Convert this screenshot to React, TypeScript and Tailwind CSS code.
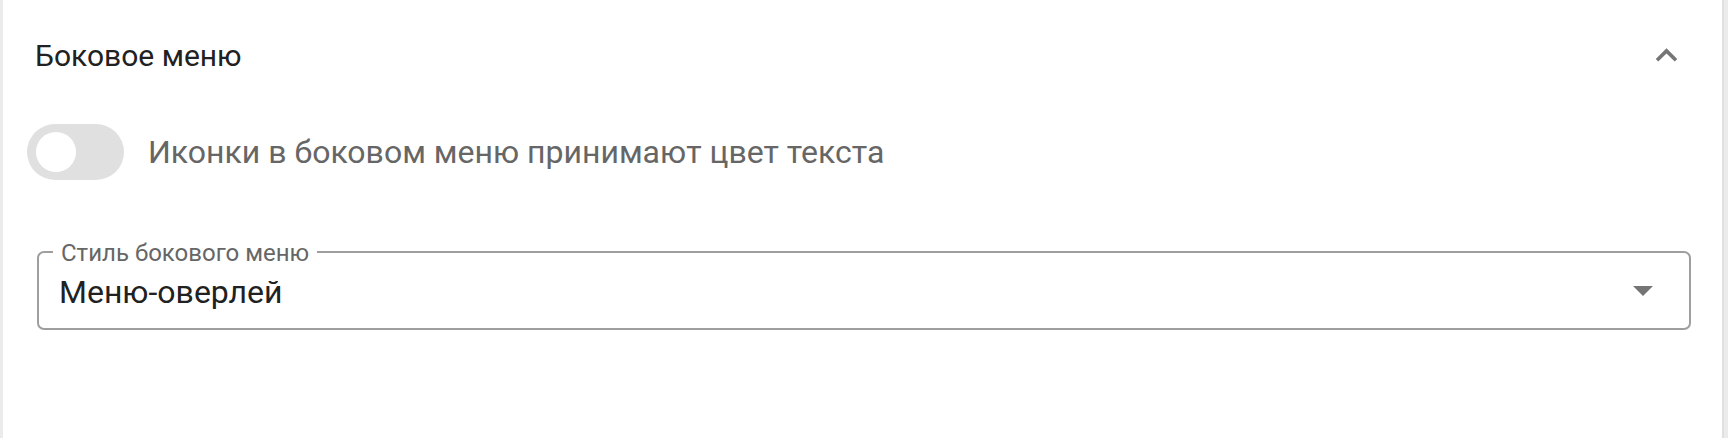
import React, { useState } from 'react'

// Settings panel: sidebar section with a toggle and a style select
function ChevronUp() {
  return (
    <svg viewBox="0 0 24 24" className="w-[43px] h-[43px] fill-[#757575]">
      <path d="m12 8-6 6 1.41 1.41L12 10.83l4.59 4.58L18 14z" />
    </svg>
  )
}

function Toggle({ checked, onChange }: { checked: boolean; onChange: () => void }) {
  return (
    <button
      type="button"
      onClick={onChange}
      className="flex items-center w-[97px] h-[56px] rounded-full bg-[#e0e0e0] pl-[9px] shrink-0"
    >
      <span className="block w-[40px] h-[40px] rounded-full bg-white" />
    </button>
  )
}

function OutlinedSelect({ label, value }: { label: string; value: string }) {
  return (
    <div className="relative flex items-center h-[79px] border-2 border-[#9e9e9e] rounded-[7px] pl-[20px] pr-[36px]">
      <span className="absolute left-[14px] top-[-12px] px-[8px] bg-white text-[24px] leading-[24px] text-[#666666]">
        {label}
      </span>
      <span className="flex-1 text-[32px] text-[#212121] pt-[3px]">{value}</span>
      <span className="w-0 h-0 border-l-[10px] border-r-[10px] border-t-[10px] border-l-transparent border-r-transparent border-t-[#757575]" />
    </div>
  )
}

export default function App() {
  const [iconsUseTextColor, setIconsUseTextColor] = useState(false)

  return (
    <div
      className="flex h-[438px] bg-[#ebebeb] pl-[3px] pr-[4px]"
      style={{ fontFamily: 'Roboto, "Noto Sans", sans-serif' }}
    >
      <div className="flex-1 bg-white border-r-2 border-[#e0e0e0]">
        <div className="flex items-center justify-between h-[111px] pl-[32px] pr-[34px]">
          <span className="text-[30px] text-[#212121]">Боковое меню</span>
          <ChevronUp />
        </div>
        <div className="flex items-center gap-[24px] pl-[24px] mt-[13px]">
          <Toggle
            checked={iconsUseTextColor}
            onChange={() => setIconsUseTextColor(!iconsUseTextColor)}
          />
          <span className="text-[32px] text-[#666666]">
            Иконки в боковом меню принимают цвет текста
          </span>
        </div>
        <div className="mt-[71px] ml-[34px] mr-[31px]">
          <OutlinedSelect label="Стиль бокового меню" value="Меню-оверлей" />
        </div>
      </div>
    </div>
  )
}
